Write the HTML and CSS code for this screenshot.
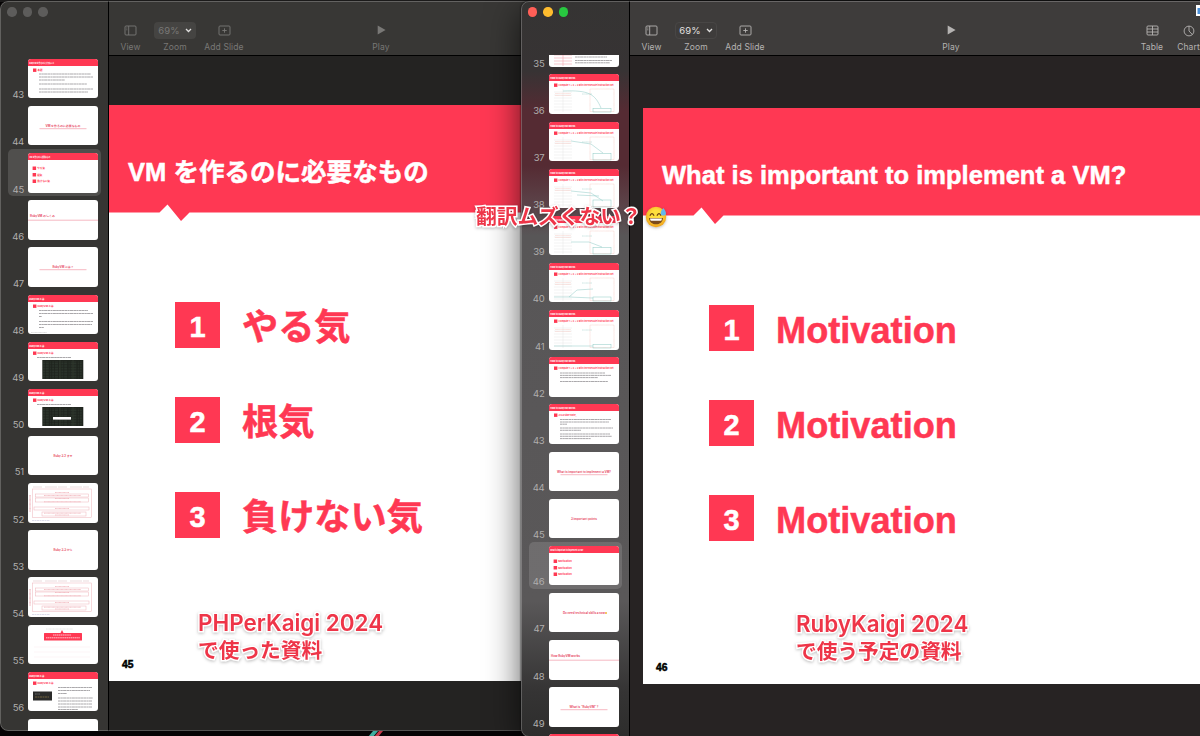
FILE: index.html
```html
<!DOCTYPE html>
<html lang="ja">
<head>
    <meta charset="UTF-8">
    <meta name="viewport" content="width=device-width, initial-scale=1.0">
    <title>Keynote</title>
    <link rel="stylesheet" href="styles.css">
</head>
<body>
    <div class="desktop">
        <svg class="wallpaper" width="30" height="6" viewBox="0 0 30 6">
            <path d="M4 6L9 0h5L9 6z" fill="#3fae9f"/>
            <path d="M10 6l5-6h4l-5 6z" fill="#c9384a"/>
        </svg>

        <div class="window window-back">
            <div class="sidebar">
                <div class="lights"><span></span><span></span><span></span></div>
                <div class="slide-list" id="list-back"></div>
            </div>
            <div class="main">
                <div class="toolbar">
                    <div class="tool view">
                        <svg width="13" height="11" viewBox="0 0 13 11"><rect x="1" y="1" width="11" height="9" rx="1"/><path d="M4.7 1v9M2.3 3h1M2.3 4.8h1"/></svg>
                        <span>View</span>
                    </div>
                    <div class="tool zoom">
                        <div class="select">69%<svg width="7" height="5" viewBox="0 0 7 5"><path d="M1 1l2.5 2.5L6 1"/></svg></div>
                        <span>Zoom</span>
                    </div>
                    <div class="tool add">
                        <svg width="13" height="11" viewBox="0 0 13 11"><rect x="1" y="1" width="11" height="9" rx="1"/><path d="M6.5 3.3v4.4M4.3 5.5h4.4"/></svg>
                        <span>Add Slide</span>
                    </div>
                    <div class="tool play">
                        <svg width="9" height="10" viewBox="0 0 9 10"><path class="fill" d="M.7.6v8.8L8.6 5z"/></svg>
                        <span>Play</span>
                    </div>
                </div>
                <div class="canvas">
                    <div class="slide">
                        <div class="slide-head"><h1>VM を作るのに必要なもの</h1></div>
                        <ol class="points">
                            <li><b>1</b><span>やる気</span></li>
                            <li><b>2</b><span>根気</span></li>
                            <li><b>3</b><span>負けない気</span></li>
                        </ol>
                        <div class="page">45</div>
                    </div>
                </div>
            </div>
        </div>

        <div class="window window-front">
            <div class="sidebar">
                <div class="lights"><span></span><span></span><span></span></div>
                <div class="slide-list" id="list-front"></div>
            </div>
            <div class="main">
                <div class="toolbar">
                    <div class="tool view">
                        <svg width="13" height="11" viewBox="0 0 13 11"><rect x="1" y="1" width="11" height="9" rx="1"/><path d="M4.7 1v9M2.3 3h1M2.3 4.8h1"/></svg>
                        <span>View</span>
                    </div>
                    <div class="tool zoom">
                        <div class="select">69%<svg width="7" height="5" viewBox="0 0 7 5"><path d="M1 1l2.5 2.5L6 1"/></svg></div>
                        <span>Zoom</span>
                    </div>
                    <div class="tool add">
                        <svg width="13" height="11" viewBox="0 0 13 11"><rect x="1" y="1" width="11" height="9" rx="1"/><path d="M6.5 3.3v4.4M4.3 5.5h4.4"/></svg>
                        <span>Add Slide</span>
                    </div>
                    <div class="tool play">
                        <svg width="9" height="10" viewBox="0 0 9 10"><path class="fill" d="M.7.6v8.8L8.6 5z"/></svg>
                        <span>Play</span>
                    </div>
                    <div class="tool table">
                        <svg width="13" height="11" viewBox="0 0 13 11"><rect x="1" y="1" width="11" height="9" rx="1"/><path d="M1 4h11M1 7h11M6.5 1v9"/></svg>
                        <span>Table</span>
                    </div>
                    <div class="tool chart">
                        <svg width="12" height="12" viewBox="0 0 12 12"><circle cx="6" cy="6" r="4.9"/><path d="M6 1v5l3.4 3.6"/></svg>
                        <span>Chart</span>
                    </div>
                </div>
                <svg class="doc-icon" width="8" height="11" viewBox="0 0 8 11"><rect width="8" height="11" fill="#fff"/><rect x="1.5" y="3" width="6.5" height="6" fill="#4a90d9"/></svg>
                <div class="canvas">
                    <div class="slide">
                        <div class="slide-head"><h1>What is important to implement a VM?</h1></div>
                        <ol class="points">
                            <li><b>1</b><span>Motivation</span></li>
                            <li><b>2</b><span>Motivation</span></li>
                            <li><b>3</b><span>Motivation</span></li>
                        </ol>
                        <div class="page">46</div>
                    </div>
                </div>
            </div>
        </div>

        <p class="note note-left"><span class="event">PHPerKaigi 2024</span><br>で使った資料</p>
        <p class="note note-right"><span class="event">RubyKaigi 2024</span><br>で使う予定の資料</p>
        <p class="note note-middle">翻訳ムズくない？<svg width="22" height="22" viewBox="0 0 22 22">
            <defs>
                <radialGradient id="face" cx="50%" cy="40%" r="60%">
                    <stop offset="0.4" stop-color="#ffdf3d"/>
                    <stop offset="1" stop-color="#f0a21c"/>
                </radialGradient>
            </defs>
            <circle cx="11" cy="11" r="10.2" fill="url(#face)"/>
            <path d="M5.2 9.2Q7 6 8.8 9.2M12.2 9.2Q14 6 15.8 9.2" fill="none" stroke="#6b3f10" stroke-width="1.3" stroke-linecap="round"/>
            <path d="M4 12h14c-.3 4-3.2 6.3-7 6.3S4.300 16 4 12z" fill="#7a4a1c"/>
            <path d="M5 12.600h12c-.1 1-.4 1.600-.8 2.200H5.800c-.4-.6-.7-1.200-.8-2.200z" fill="#fff"/>
            <path d="M18.300 2c1.700 2.300 2.600 3.700 2.600 5a2.600 2.600 0 0 1-5.200 0c0-1.300.9-2.700 2.600-5z" fill="#62b8ee"/>
        </svg></p>
    </div>

    <script src="script.js"></script>
</body>
</html>
```
FILE: styles.css
```css
body {
    font-family: Inter, "Noto Sans CJK JP", sans-serif;
    margin: 0;
    background-color: #000;
}
.desktop {
    position: relative;
    width: 1200px;
    height: 736px;
    overflow: hidden;
    background: linear-gradient(#1b1a1a 2px, #060405 2px);
}
.wallpaper {
    position: absolute;
    left: 364px;
    top: 731px;
}

/* windows */
.window {
    position: absolute;
    top: 1px;
    display: flex;
    border-radius: 8px;
    overflow: hidden;
}
.window::after {
    content: "";
    position: absolute;
    inset: 0;
    border: 1px solid rgba(255, 255, 255, 0.22);
    border-radius: 8px;
    pointer-events: none;
}
.window-back {
    left: 0;
    width: 900px;
    height: 730px;
}
.window-front {
    left: 521px;
    width: 900px;
    height: 736px;
    box-shadow: 0 10px 34px rgba(0, 0, 0, 0.65), 0 0 2px #000;
}
.sidebar {
    box-sizing: border-box;
    flex: none;
    display: flex;
    flex-direction: column;
    width: 109px;
    background: #363533;
    border-right: 1px solid #000;
}
.window-front .sidebar {
    background: linear-gradient(#353433 0, #373334 70px, #552b33 110px, #552b33 165px, #5b4147 200px, #585657 235px, #5a5859 600px, #353434 690px, #2d2d2c 736px);
}
.lights {
    flex: none;
    display: flex;
    gap: 6px;
    height: 48px;
    padding: 6px 0 0 7px;
}
.lights span {
    width: 9.5px;
    height: 9.5px;
    border-radius: 50%;
    background: #5d5c5b;
}
.window-front .lights {
    padding-left: 6.5px;
}
.window-front .lights span:nth-child(1) { background: #ff5f57; }
.window-front .lights span:nth-child(2) { background: #febc2e; }
.window-front .lights span:nth-child(3) { background: #28c840; }

/* slide navigator */
.slide-list {
    flex: 1;
    overflow: hidden;
    padding-left: 8px;
}
#list-front {
    padding-left: 7.5px;
}
#list-front .row:first-child {
    margin-top: -31.6px;
}
.row {
    box-sizing: border-box;
    display: flex;
    align-items: flex-end;
    width: 93px;
    height: 47.15px;
    padding: 3.8px 0;
    border-radius: 5px;
    color: #b0aead;
    font-size: 9.5px;
    line-height: 7px;
}
.row.selected {
    background: rgba(255, 255, 255, 0.13);
}
.row span {
    width: 16px;
    margin-right: 4px;
    letter-spacing: -0.2px;
    text-align: right;
}
.row svg {
    display: block;
    border-radius: 3px;
    background: #fff;
}

/* toolbar */
.main {
    flex: 1;
    position: relative;
    display: flex;
    flex-direction: column;
    min-width: 0;
}
.toolbar {
    box-sizing: border-box;
    flex: none;
    display: flex;
    height: 55px;
    padding-top: 20px;
    background: #383735;
    border-bottom: 1px solid #000;
    color: #797876;
}
.window-front .toolbar {
    background: #3e3c3b;
    color: #b5b3b2;
}
.tool {
    flex: none;
    display: flex;
    flex-direction: column;
    align-items: center;
    font-size: 8.5px;
    line-height: 12px;
    letter-spacing: 0.1px;
    white-space: nowrap;
}
.tool > span {
    margin-top: auto;
    margin-bottom: 2px;
}
.tool svg {
    margin-top: 4px;
    fill: none;
    stroke: currentColor;
    stroke-width: 0.9;
}
.tool .fill {
    fill: currentColor;
    stroke: none;
}
.view { width: 43px; }
.zoom { width: 46px; }
.add { width: 52px; }
.play {
    width: 44px;
    margin-left: 109px;
}
.window-front .play { margin-left: 158px; }
.table {
    width: 36px;
    margin-left: 161px;
}
.chart { width: 37px; }
.select {
    box-sizing: border-box;
    display: flex;
    align-items: center;
    justify-content: center;
    gap: 5px;
    width: 42px;
    height: 17px;
    margin-top: 1px;
    border-radius: 4px;
    background: #454442;
    font-size: 9.5px;
}
.select svg {
    margin: 0;
    stroke: #e0dfde;
    stroke-width: 1.3;
}
.window-front .select {
    background: none;
    border: 1px solid #484645;
    color: #e3e1e0;
}
.doc-icon {
    position: absolute;
    left: 566px;
    top: 4px;
}

/* slide */
.canvas {
    flex: 1;
    padding-top: 49px;
    background: #242322;
}
.window-front .canvas {
    padding: 52px 0 0 13px;
    background: #272323;
}
.slide {
    display: flex;
    flex-direction: column;
    width: 1024px;
    height: 576px;
    background: #fff;
    font-family: "Liberation Sans", "Noto Sans CJK JP", sans-serif;
    font-weight: bold;
    -webkit-text-stroke: 0.5px currentColor;
}
.slide-head {
    box-sizing: border-box;
    height: 117px;
    padding: 49px 0 0 19px;
    background: #ff3853;
    clip-path: polygon(0 0, 100% 0, 100% 107.5px, 80.5px 107.5px, 72px 116px, 58.5px 99.5px, 50.5px 107.5px, 0 107.5px);
}
h1 {
    margin: 0;
    color: #fff;
    font-size: 25.5px;
    line-height: 37px;
    letter-spacing: 0.03px;
    white-space: nowrap;
}
.points {
    display: flex;
    flex-direction: column;
    gap: 49px;
    margin: 80px 0 0 66px;
    padding: 0;
    list-style: none;
}
.points li {
    display: flex;
    align-items: center;
    gap: 22px;
    height: 46px;
    color: #ff3853;
    font-size: 36.2px;
    line-height: 46px;
}
.points span {
    padding-top: 5px;
}
.points b {
    width: 45px;
    height: 46px;
    background: #ff3853;
    color: #fff;
    font-size: 29px;
    line-height: 50px;
    text-align: center;
}
.page {
    margin: auto 0 9px 13px;
    color: #000;
    font-size: 10.3px;
    line-height: 14px;
}

/* annotations on top of both windows */
.note {
    position: absolute;
    margin: 0;
    color: #ee3548;
    font-size: 20.7px;
    font-weight: 600;
    line-height: 27px;
    white-space: nowrap;
    -webkit-text-stroke: 3px #fff;
    paint-order: stroke fill;
    filter: drop-shadow(0 1.5px 1.5px rgba(0, 0, 0, 0.25));
}
.note .event {
    font-size: 22.4px;
}
.note-left {
    left: 198px;
    top: 609px;
}
.note-right {
    left: 796px;
    top: 610px;
}
.note-middle {
    display: flex;
    align-items: center;
    left: 476px;
    top: 203px;
}
.note svg {
    margin-left: 3px;
}
```
FILE: script.js
```js
const RED = '#ff3853';

function text(x, y, size, color, str, width, anchor) {
    const fit = width ? ` textLength="${width}" lengthAdjust="spacingAndGlyphs"` : '';
    return `<text x="${x}" y="${y}" font-size="${size}" fill="${color}" font-weight="700" text-anchor="${anchor || 'start'}"${fit}>${str}</text>`;
}

function line(x, y, w, color, dash, h) {
    return `<path d="M${x} ${y}h${w}" stroke="${color}" stroke-width="${h || 0.9}" ${dash ? `stroke-dasharray="${dash}"` : ''}/>`;
}

function head(str, width) {
    return `<rect width="70" height="7" fill="${RED}"/>` + text(1.3, 5.2, 2.4, '#fff', str, width);
}

function bullet(str, width) {
    return `<rect x="5" y="9.5" width="3.4" height="3.4" fill="${RED}"/>` + text(9.6, 12.4, 2.5, RED, str, width);
}

// lines: [y, width]
function para(x, lines) {
    return lines.map(l => line(x, l[0], l[1], '#a09ea2', '2.6 .3 1.9 .3 3.2 .3', 0.9)).join('');
}

function center(str, width, y, underline) {
    return text(35, y, 2.8, '#e8506a', str, width, 'middle') +
        (underline ? line(11.5, y + 1.9, 47, '#f08a9a', '', 0.6) : '');
}

function section(str, width) {
    return text(2, 17.2, 2.8, '#e8506a', str, width) + line(0, 20.2, 70, '#f08a9a', '', 0.6);
}

function list(items) {
    return items.map((s, i) =>
        `<rect x="4.6" y="${13.5 + i * 6.5}" width="3.5" height="3.5" fill="${RED}"/>` +
        text(9.2, 16.2 + i * 6.5, 2.6, RED, s)).join('');
}

function terminal(popup) {
    let s = '<rect x="14.3" y="18" width="41" height="19" fill="#20251f"/>';
    for (let y = 20; y < 37; y += 1.6) s += line(15, y, 39, '#38473a', '2 .8 3 1.4 1 1', 0.5);
    s += '<path d="M32 18v19M45 18v19" stroke="#55604f" stroke-width=".3"/>';
    if (popup) s += '<rect x="25" y="28" width="18" height="2.6" fill="#fff"/>';
    return s;
}

function boxes() {
    let s = '<g fill="none" stroke="#eeb4ba" stroke-width=".5"><rect x="4.5" y="6" width="59" height="28.5"/><rect x="7.5" y="11" width="53" height="3"/><rect x="7.5" y="15" width="53" height="4"/><rect x="6" y="24" width="55" height="3"/><rect x="14" y="29" width="44" height="4"/></g>';
    [9.5, 12.5, 15.5, 18.8, 25.5, 30.2, 32].forEach((y, i) => { s += line(i % 2 ? 16 : 27, y, i % 2 ? 37 : 14, '#efa9b2', '1 .3', 0.7); });
    return s + line(5, 4, 56, '#d5b7bb', '9 3 12 1', 0.5) + line(4, 37.5, 18, '#aac', '2 .5', 0.4) +
        '<path d="M2 12v17" stroke="#e9a0aa" stroke-width="1" stroke-dasharray="1 .3"/>';
}

function diagram(curve, y) {
    let s = '<g stroke="#dfdde0" stroke-width=".4" fill="none"><path d="M5 18h18M5 21h18M5 24h18M5 27h18M5 30h18M5 33h18M5 36h18M14 15v23"/></g>';
    s += '<g stroke="#f3b3a8" stroke-width=".4" fill="none"><path d="M41 37.5V15h24v22.5zM6 19.5h16M6 21.5h16" stroke-dasharray=".8 .3"/></g>';
    return s + `<path d="${curve}" stroke="#8cc9c4" stroke-width=".5" fill="none"/><rect x="44" y="${y}" width="18" height="${38 - y}" stroke="#8cc9c4" stroke-width=".5" fill="none"/>` +
        line(33, 20, 10, '#9ccfc9', '1 .3', 0.5);
}

const compute = diagramPart => head("How to RubyVM works", 25) + bullet('Compute 1 + 2 + 3 with the execute instruction set', 55) + diagramPart;
const body = [[16, 45], [18.4, 51], [20.6, 38], [24.5, 48]];

// slide number -> thumbnail content
const back = {
    43: head('RubyVM を作るのに大切なこと', 25) + bullet('本題', 5) + para(11, [[15, 52], [18, 54], [21, 26], [25, 48], [30, 54], [33, 49]]),
    44: center('VM を作るのに必要なもの', 35, 20.8, true),
    45: head('VM を作るのに必要なもの', 21) + list(['やる気', '根気', '負けない気']),
    46: section('RubyVM のしくみ', 25),
    47: center('RubyVM とは？', 21, 20.8, true),
    48: head('RubyVM とは', 15) + bullet('RubyVM とは', 16) + para(11, [[15.5, 49], [18.5, 54], [21.5, 3], [26.5, 54], [29.5, 53], [32.5, 5]]) + line(3, 37.5, 16, '#bbb', '1 .3', 0.5),
    49: head('RubyVM とは', 15) + bullet('RubyVM とは', 16) + para(9, [[15.5, 34]]) + terminal(false),
    50: head('RubyVM とは', 15) + bullet('RubyVM とは', 16) + para(9, [[15.5, 34]]) + terminal(true),
    51: center('Ruby 3.2 まで', 19, 20.8),
    52: boxes(),
    53: center('Ruby 3.3 から', 19, 20.8),
    54: boxes(),
    55: `<rect x="16" y="8" width="38" height="7.5" rx=".6" fill="${RED}"/><path d="M32.5 8l1.5-3 1.5 3z" fill="${RED}"/>` + line(25, 10, 18, '#fff', '1.5 .4', 0.7) + line(18, 12.8, 34, '#fff', '1.5 .4', 0.7) + line(18, 4, 27, '#ccc', '1 .4', 0.5) + line(6, 22, 56, '#fbe6e8', '', 0.4) + line(6, 27, 56, '#fbe6e8', '', 0.4) + line(6, 32, 56, '#fbe6e8', '', 0.4),
    56: head('RubyVM とは', 15) + bullet('RubyVM とは', 16) + '<rect x="5" y="19.5" width="19" height="9" fill="#2b2b2a"/>' + line(7, 22, 5, '#aaa', '1 .3', 0.5) + line(7, 25, 14, '#b49a55', '2 .5', 0.5) + para(30, [[15.5, 34], [18.5, 32], [21.5, 9], [26, 35], [29, 34], [32, 34], [35, 34], [37.5, 20]]),
    57: ''
};

const front = {
    35: '<path d="M5 28h18M5 31h18M5 34h18M5 37h18M14 26v13" stroke="#f4a5b0" stroke-width=".6"/>' + para(26, [[30, 32], [33.5, 37], [35.8, 35]]),
    36: compute(diagram('M14 17C40 16 46 20 52 34', 34.5)),
    37: compute(diagram('M22 19L42 22L54 31', 31.5)),
    38: compute(diagram('M22 22L42 24L54 32M28 26L50 27', 31)),
    39: compute(diagram('M22 26H40L53 31', 31.5)),
    40: compute(diagram('M5 34H20L28 27L44 26M20 34L44 35', 34)),
    41: compute(diagram('M5 36H44', 34.5)),
    42: compute(para(11, body)),
    43: head('How to RubyVM works', 25) + bullet('As a side note,', 18) + para(11, [[15.5, 51], [18, 49], [20.2, 7], [24, 53], [26.3, 21], [30, 50], [32.3, 52], [34.6, 31]]),
    44: center('What is important to implement a VM?', 54, 20.8, true),
    45: center('3 important points', 26, 20.8),
    46: head('What is important to implement a VM?', 33) + list(['Motivation', 'Motivation', 'Motivation']),
    47: center('Do need technical skills a now', 42, 20.8) + '<circle cx="57" cy="20" r="1" fill="#f2b632"/>',
    48: section('How RubyVM works', 29),
    49: center('What is “RubyVM” ?', 29, 20.8, true),
    50: head('', 0)
};

function render(id, slides, selected, last) {
    document.getElementById(id).innerHTML = Object.keys(slides).map(n => `
        <div class="row${n == selected ? ' selected' : ''}">
            <span>${n > last ? '' : n}</span>
            <svg width="70" height="39.5" viewBox="0 0 70 39.5">${slides[n]}</svg>
        </div>`).join('');
}

render('list-back', back, 45, 56);
render('list-front', front, 46, 49);
```
